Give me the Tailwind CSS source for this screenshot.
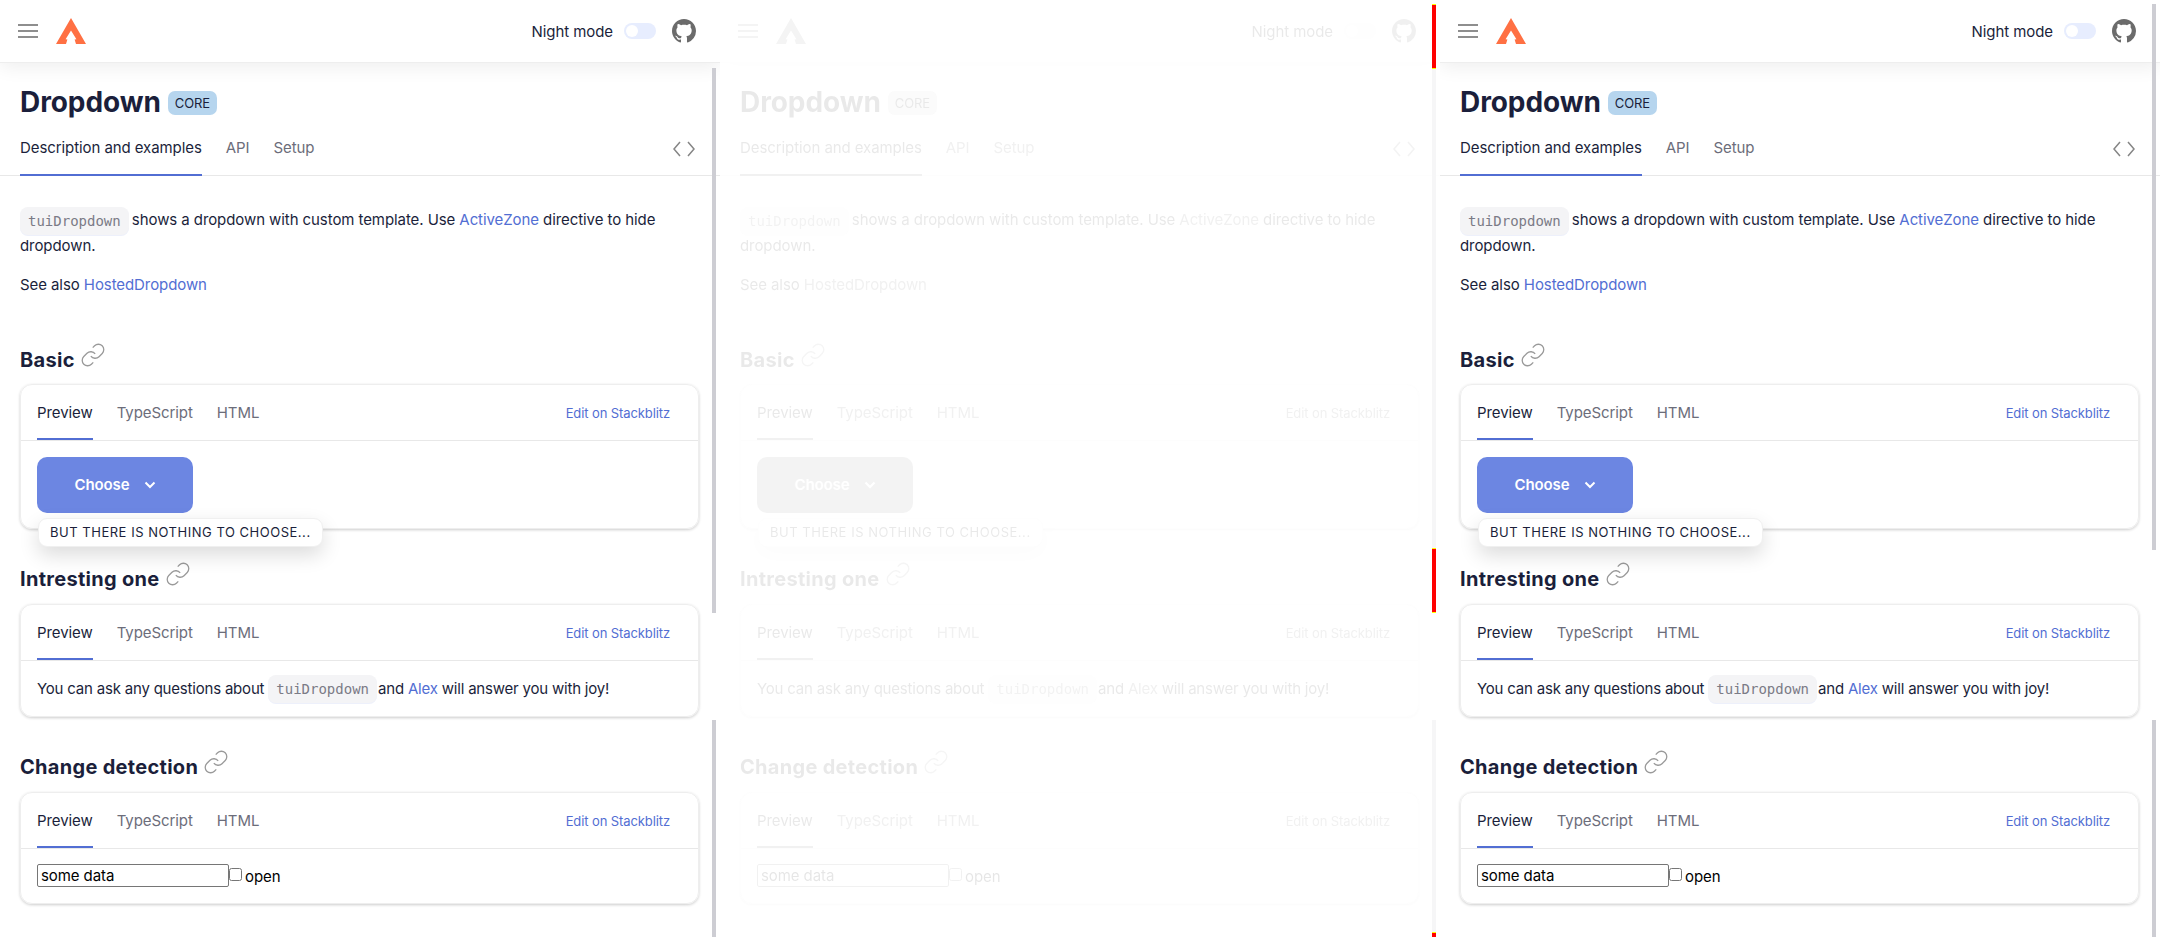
<!DOCTYPE html>
<html lang="en">
<head>
    <meta charset="UTF-8">
    <title>Dropdown</title>
    <script src="https://cdn.jsdelivr.net/npm/@tailwindcss/browser@4"></script>
</head>
<body class="bg-white overflow-hidden font-['Inter',sans-serif] text-[15px] tracking-[-0.08px] text-[#1b1f3b]">

<!-- the demo page, stamped into each of the three panes below -->
<template id="demo">
    <header class="relative z-20 h-[63px] flex items-center bg-white border-b border-[#eeeeee] shadow-[0_4px_18px_rgba(0,0,0,0.07)]">
        <div class="ml-[18px] w-[20px] flex flex-col gap-[4px]">
            <span class="h-[2px] bg-[#8e8e8e]"></span>
            <span class="h-[2px] bg-[#8e8e8e]"></span>
            <span class="h-[2px] bg-[#8e8e8e]"></span>
        </div>
        <svg class="ml-[18px] mt-[-1px]" width="30" height="26" viewBox="0 0 30 26"><path fill="#ff7043" d="M15 0 30 26H20L18.6 21.5 20.4 21.2 15 12.500 9.600 21.200 11.400 21.500 10 26H0Z"/></svg>
        <span class="ml-auto mt-[2px]">Night mode</span>
        <span class="ml-[11px] w-[32px] h-[16px] rounded-full bg-[#e7edfe] flex items-center pl-[2px]"><span class="w-[12px] h-[12px] rounded-full bg-white"></span></span>
        <svg class="ml-[16px] mr-[24px]" width="24" height="24" viewBox="0 0 16 16"><path fill="#6b6b6b" d="M8 0C3.580 0 0 3.580 0 8c0 3.540 2.290 6.530 5.470 7.590.4.070.55-.17.55-.38 0-.19-.01-.82-.01-1.490-2.010.37-2.530-.49-2.690-.94-.09-.23-.48-.94-.82-1.130-.28-.15-.68-.52-.01-.53.63-.01 1.080.58 1.230.82.72 1.210 1.870.87 2.330.66.070-.52.28-.87.510-1.070-1.780-.2-3.640-.89-3.640-3.950 0-.87.31-1.590.82-2.150-.08-.2-.36-1.020.08-2.120 0 0 .67-.21 2.200.82.64-.18 1.320-.27 2-.27s1.360.09 2 .27c1.530-1.040 2.200-.82 2.200-.82.44 1.100.16 1.920.08 2.120.51.56.82 1.270.82 2.150 0 3.070-1.870 3.750-3.650 3.950.29.25.54.73.54 1.480 0 1.070-.01 1.930-.01 2.200 0 .21.15.46.55.38A8.010 8.010 0 0 0 16 8c0-4.420-3.580-8-8-8z"/></svg>
    </header>

    <main>
        <div class="h-[57px] px-[20px] pt-[20px] flex items-center">
            <h1 class="text-[28px] font-bold leading-[36px]">Dropdown</h1>
            <span class="ml-[7px] mt-[2px] h-[24px] px-[7px] rounded-[7px] bg-[#b6d5ee] text-[13px] leading-[24px]">CORE</span>
        </div>

        <nav class="h-[56px] px-[20px] pt-[2px] flex items-center gap-[24px] border-b border-[#e8e8e8] text-[#6c6d7a]">
            <a class="h-full flex items-center border-b-2 border-[#526ed3] text-[#1b1f3b] mb-[-1px]">Description and examples</a>
            <a>API</a>
            <a>Setup</a>
            <svg class="ml-auto mr-[4px]" width="24" height="16" viewBox="0 0 24 16" fill="none" stroke="#858585" stroke-width="1.500"><path d="M8 1 2 8l6 7M16 1l6 7-6 7"/></svg>
        </nav>

        <div class="pl-[20px] pr-[21px] pt-[31px]">
            <p class="leading-[25px]"><code class="inline-block h-[28px] my-[-2px] mr-[-1px] px-[8px] rounded-[8px] bg-[#f4f4f6] shadow-[0_1px_0_#edf0fb] font-['DejaVu_Sans_Mono',monospace] text-[14px] tracking-normal leading-[28px] text-[#7b7b86] align-middle">tuiDropdown</code> shows a dropdown with custom template. Use <a class="text-[#526ed3]">ActiveZone</a> directive to hide dropdown.</p>
            <p class="mt-[14px] leading-[25px]">See also <a class="text-[#526ed3]">HostedDropdown</a></p>

            <h2 class="mt-[49px] mb-[10px] h-[28px] flex items-start gap-[5px] text-[20px] tracking-[0.3px] font-bold leading-[28px]">
                Basic
                <svg class="mt-[-4px]" width="26" height="26" viewBox="0 0 24 24" fill="none" stroke="#9a9a9a" stroke-width="1.200"><path d="M10 13a5 5 0 0 0 7.540.54l3-3a5 5 0 0 0-7.070-7.070l-1.720 1.710"/><path d="M14 11a5 5 0 0 0-7.540-.54l-3 3a5 5 0 0 0 7.070 7.070l1.710-1.710"/></svg>
            </h2>
            <section class="rounded-[12px] border border-[#eeeeee] shadow-[0_1px_3px_rgba(0,0,0,0.2)]">
                <div class="h-[56px] pl-[16px] pr-[28px] pt-[2px] flex items-center gap-[24px] border-b border-[#e8e8e8] text-[#6c6d7a]">
                    <a class="h-full flex items-center border-b-2 border-[#526ed3] text-[#1b1f3b] mb-[-1px]">Preview</a>
                    <a>TypeScript</a>
                    <a>HTML</a>
                    <a class="ml-auto text-[13px] tracking-[-0.1px] text-[#526ed3]">Edit on Stackblitz</a>
                </div>
                <div class="relative px-[16px] pt-[16px] pb-[15px]">
                    <button class="w-[156px] h-[56px] rounded-[10px] bg-[#6c86e2] text-white font-semibold flex items-center justify-center gap-[14px]">
                        Choose
                        <svg width="12" height="8" viewBox="0 0 12 8" fill="none" stroke="#ffffff" stroke-width="2"><path d="M1.500 1.500 6 6l4.500-4.500"/></svg>
                    </button>
                    <div class="absolute left-[17px] top-[77px] z-10 h-[29px] px-[11px] rounded-[9px] bg-white border border-[#f0f0f0] shadow-[0_8px_20px_rgba(0,0,0,0.14)] text-[13px] leading-[27px] tracking-[0.04em] whitespace-nowrap">BUT THERE IS NOTHING TO CHOOSE...</div>
                </div>
            </section>

            <h2 class="mt-[36px] mb-[11px] h-[28px] flex items-start gap-[5px] text-[20px] tracking-[0.3px] font-bold leading-[28px]">
                Intresting one
                <svg class="mt-[-4px]" width="26" height="26" viewBox="0 0 24 24" fill="none" stroke="#9a9a9a" stroke-width="1.200"><path d="M10 13a5 5 0 0 0 7.540.54l3-3a5 5 0 0 0-7.070-7.070l-1.720 1.710"/><path d="M14 11a5 5 0 0 0-7.540-.54l-3 3a5 5 0 0 0 7.070 7.070l1.710-1.710"/></svg>
            </h2>
            <section class="rounded-[12px] border border-[#eeeeee] shadow-[0_1px_3px_rgba(0,0,0,0.2)]">
                <div class="h-[56px] pl-[16px] pr-[28px] pt-[2px] flex items-center gap-[24px] border-b border-[#e8e8e8] text-[#6c6d7a]">
                    <a class="h-full flex items-center border-b-2 border-[#526ed3] text-[#1b1f3b] mb-[-1px]">Preview</a>
                    <a>TypeScript</a>
                    <a>HTML</a>
                    <a class="ml-auto text-[13px] tracking-[-0.1px] text-[#526ed3]">Edit on Stackblitz</a>
                </div>
                <p class="h-[55px] px-[16px] pt-[14px] leading-[28px] tracking-[-0.2px]">You can ask any questions about <code class="inline-block h-[28px] mr-[-3px] px-[8px] rounded-[8px] bg-[#f4f4f6] shadow-[0_1px_0_#edf0fb] font-['DejaVu_Sans_Mono',monospace] text-[14px] tracking-normal leading-[28px] text-[#7b7b86]">tuiDropdown</code> and <a class="text-[#526ed3]">Alex</a> will answer you with joy!</p>
            </section>

            <h2 class="mt-[36px] mb-[11px] h-[28px] flex items-start gap-[5px] text-[20px] tracking-[0.3px] font-bold leading-[28px]">
                Change detection
                <svg class="mt-[-4px]" width="26" height="26" viewBox="0 0 24 24" fill="none" stroke="#9a9a9a" stroke-width="1.200"><path d="M10 13a5 5 0 0 0 7.540.54l3-3a5 5 0 0 0-7.070-7.070l-1.720 1.710"/><path d="M14 11a5 5 0 0 0-7.540-.54l-3 3a5 5 0 0 0 7.070 7.070l1.710-1.710"/></svg>
            </h2>
            <section class="rounded-[12px] border border-[#eeeeee] shadow-[0_1px_3px_rgba(0,0,0,0.2)]">
                <div class="h-[56px] pl-[16px] pr-[28px] pt-[2px] flex items-center gap-[24px] border-b border-[#e8e8e8] text-[#6c6d7a]">
                    <a class="h-full flex items-center border-b-2 border-[#526ed3] text-[#1b1f3b] mb-[-1px]">Preview</a>
                    <a>TypeScript</a>
                    <a>HTML</a>
                    <a class="ml-auto text-[13px] tracking-[-0.1px] text-[#526ed3]">Edit on Stackblitz</a>
                </div>
                <div class="h-[54px] px-[16px] pt-[15px] flex items-start">
                    <input type="text" value="some data" class="w-[192px] h-[23px] px-[3px] border border-[#767676] rounded-[2px] text-black">
                    <input type="checkbox" class="mt-[4px] w-[13px] h-[13px]">
                    <span class="ml-[3px] mt-[2px] text-black">open</span>
                </div>
            </section>
        </div>
    </main>
</template>

<div class="flex h-[937px]">
    <!-- normal pane -->
    <div class="relative w-[720px] h-full overflow-hidden">
        <div data-demo></div>
        <span class="absolute z-30 left-[712px] top-[68px] w-[4px] h-[545px] bg-[#cdcdd3]"></span>
        <span class="absolute z-30 left-[712px] top-[720px] w-[4px] h-[217px] bg-[#cdcdd3]"></span>
    </div>

    <!-- faded pane, its scrollbar shows the changed regions in red -->
    <div class="relative w-[720px] h-full overflow-hidden">
        <div data-demo class="opacity-10 grayscale"></div>
        <span class="absolute z-30 left-[712px] top-[69px] w-[4px] h-[479px] bg-[#f6f6f7]"></span>
        <span class="absolute z-30 left-[712px] top-[720px] w-[4px] h-[212px] bg-[#f6f6f7]"></span>
        <span class="absolute z-30 left-[712px] top-[4px] w-[4px] h-[65px] bg-[#ff0000] border-y border-[#ffff00]"></span>
        <span class="absolute z-30 left-[712px] top-[548px] w-[4px] h-[65px] bg-[#ff0000] border-y border-[#ffff00]"></span>
        <span class="absolute z-30 left-[712px] top-[932px] w-[4px] h-[5px] bg-[#ff0000] border-t border-[#ffff00]"></span>
    </div>

    <!-- normal pane, scrollbar thumb starts at the top -->
    <div class="relative w-[720px] h-full overflow-hidden">
        <div data-demo></div>
        <span class="absolute z-30 left-[712px] top-[4px] w-[4px] h-[546px] bg-[#cdcdd3]"></span>
        <span class="absolute z-30 left-[712px] top-[720px] w-[4px] h-[217px] bg-[#cdcdd3]"></span>
    </div>
</div>

<script>
    const demo = document.getElementById("demo");
    document.querySelectorAll("[data-demo]").forEach((pane) => {
        pane.appendChild(demo.content.cloneNode(true));
    });
</script>

</body>
</html>
